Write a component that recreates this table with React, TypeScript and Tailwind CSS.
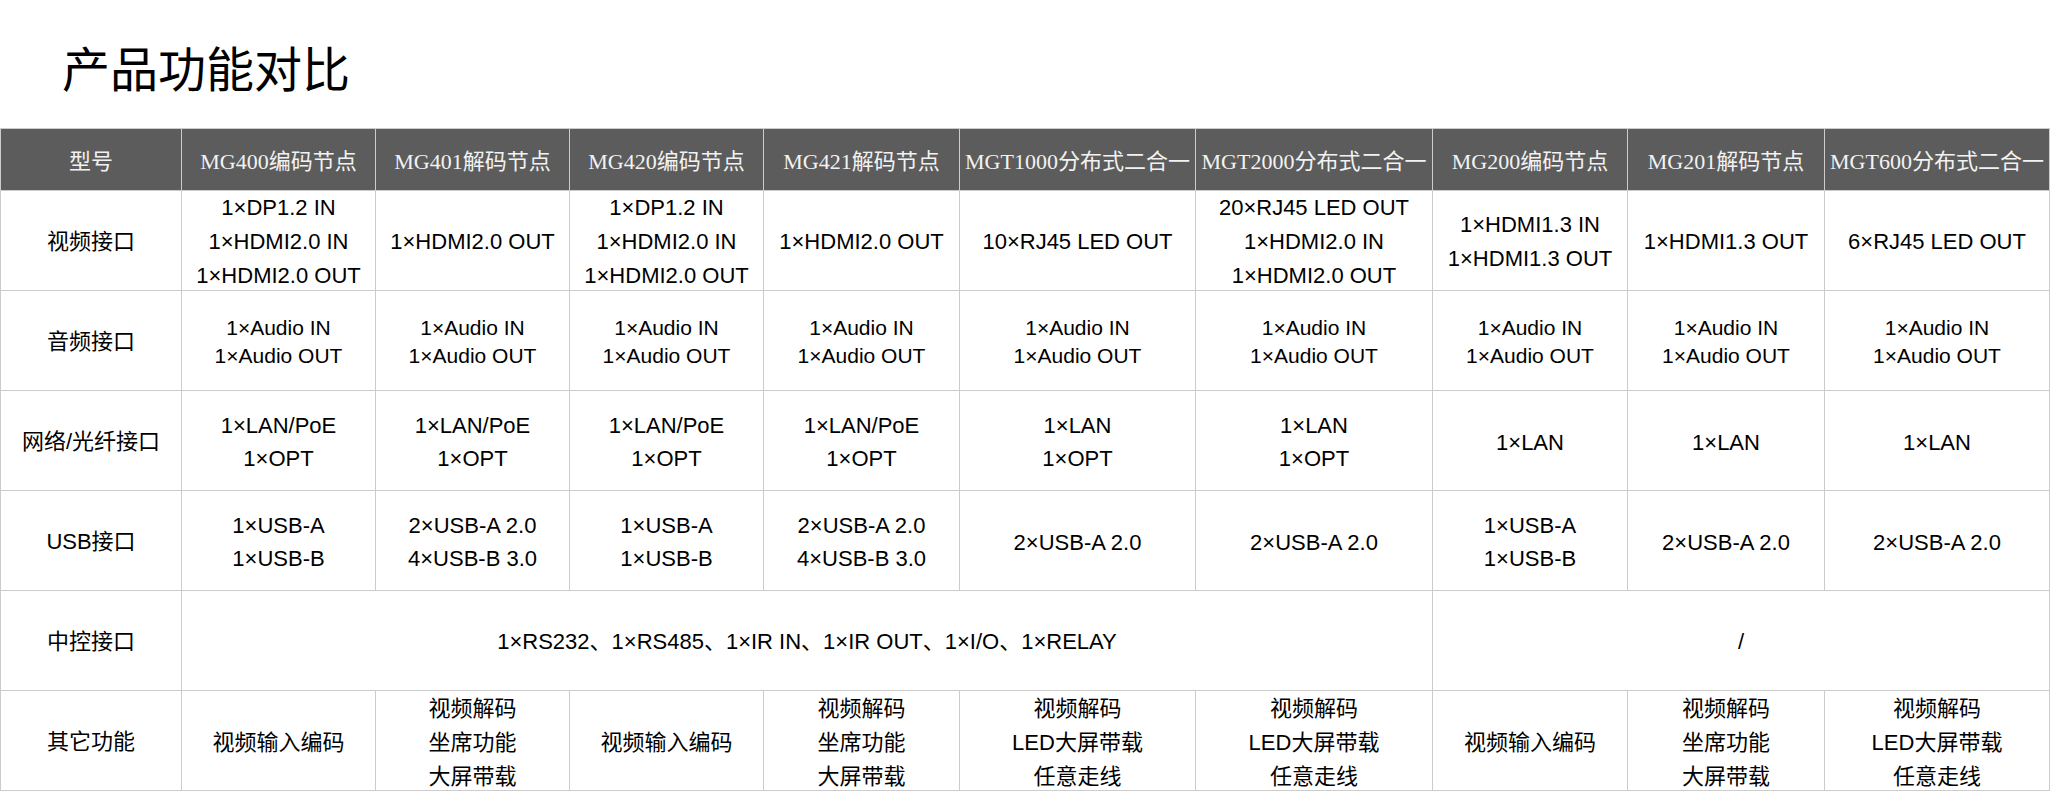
import React from 'react';

const HEADERS = [
  '型号',
  'MG400编码节点',
  'MG401解码节点',
  'MG420编码节点',
  'MG421解码节点',
  'MGT1000分布式二合一',
  'MGT2000分布式二合一',
  'MG200编码节点',
  'MG201解码节点',
  'MGT600分布式二合一',
];

const ENC_VIDEO = '1×DP1.2 IN\n1×HDMI2.0 IN\n1×HDMI2.0 OUT';
const AUDIO = '1×Audio IN\n1×Audio OUT';
const USB_AB = '1×USB-A\n1×USB-B';
const USB_DEC = '2×USB-A 2.0\n4×USB-B 3.0';
const SEAT = '视频解码\n坐席功能\n大屏带载';
const LED = '视频解码\nLED大屏带载\n任意走线';

interface SpecRow {
  label: string;
  cells: string[];
  size: string;
  leading: string;
}

const ROWS: SpecRow[] = [
  {
    label: '视频接口',
    cells: [
      ENC_VIDEO,
      '1×HDMI2.0 OUT',
      ENC_VIDEO,
      '1×HDMI2.0 OUT',
      '10×RJ45 LED OUT',
      '20×RJ45 LED OUT\n1×HDMI2.0 IN\n1×HDMI2.0 OUT',
      '1×HDMI1.3 IN\n1×HDMI1.3 OUT',
      '1×HDMI1.3 OUT',
      '6×RJ45 LED OUT',
    ],
    size: 'text-[22px]',
    leading: 'leading-[34px]',
  },
  {
    label: '音频接口',
    cells: Array(9).fill(AUDIO),
    size: 'text-[21px]',
    leading: 'leading-[28px]',
  },
  {
    label: '网络/光纤接口',
    cells: [
      '1×LAN/PoE\n1×OPT',
      '1×LAN/PoE\n1×OPT',
      '1×LAN/PoE\n1×OPT',
      '1×LAN/PoE\n1×OPT',
      '1×LAN\n1×OPT',
      '1×LAN\n1×OPT',
      '1×LAN',
      '1×LAN',
      '1×LAN',
    ],
    size: 'text-[22px]',
    leading: 'leading-[33px]',
  },
  {
    label: 'USB接口',
    cells: [USB_AB, USB_DEC, USB_AB, USB_DEC, '2×USB-A 2.0', '2×USB-A 2.0', USB_AB, '2×USB-A 2.0', '2×USB-A 2.0'],
    size: 'text-[22px]',
    leading: 'leading-[33px]',
  },
];

const OTHER = ['视频输入编码', SEAT, '视频输入编码', SEAT, LED, LED, '视频输入编码', SEAT, LED];

const cellBase =
  'flex items-center justify-center text-center whitespace-pre-line border-r border-b border-[#cccccc] text-black';

export default function App() {
  return (
    <div className="w-[2050px] bg-white font-['Liberation_Sans','Noto_Sans_CJK_SC',sans-serif]">
      {/* Title */}
      <div className="h-[128px] pt-[42px] pl-[62px]">
        <h1 className="text-[48px] leading-[48px] font-normal text-black font-['Noto_Sans_CJK_SC',sans-serif]">
          产品功能对比
        </h1>
      </div>

      {/* Comparison table */}
      <div className="grid grid-cols-[181px_194px_194px_194px_196px_236px_237px_195px_197px_225px] grid-rows-[62px_repeat(6,100px)] border-t border-l border-[#cccccc]">
        {HEADERS.map((h) => (
          <div
            key={h}
            className="flex items-center justify-center pt-[4px] bg-[#5c5c5c] border-r border-b border-[#cccccc] text-[#f2f2f2] text-[22px] whitespace-nowrap font-['Liberation_Serif','Noto_Sans_CJK_SC',serif]"
          >
            {h}
          </div>
        ))}

        {ROWS.map((row) => (
          <React.Fragment key={row.label}>
            <div className={`${cellBase} text-[22px] pt-[2px]`}>{row.label}</div>
            {row.cells.map((c, i) => (
              <div key={i} className={`${cellBase} ${row.size} ${row.leading} pt-[3px]`}>
                {c}
              </div>
            ))}
          </React.Fragment>
        ))}

        {/* 中控接口 */}
        <div className={`${cellBase} text-[22px] pt-[2px]`}>中控接口</div>
        <div className={`${cellBase} col-span-6 text-[22px] pt-[2px]`}>
          1×RS232、1×RS485、1×IR IN、1×IR OUT、1×I/O、1×RELAY
        </div>
        <div className={`${cellBase} col-span-3 text-[22px] pt-[2px]`}>/</div>

        {/* 其它功能 */}
        <div className={`${cellBase} text-[22px] pt-[2px]`}>其它功能</div>
        {OTHER.map((c, i) => (
          <div key={i} className={`${cellBase} text-[22px] leading-[34px] pt-[5px] overflow-hidden`}>
            {c}
          </div>
        ))}
      </div>
    </div>
  );
}
